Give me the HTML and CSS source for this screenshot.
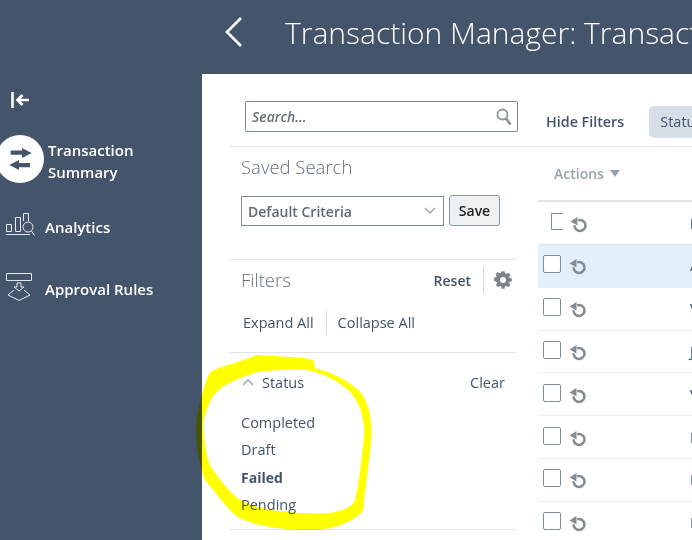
FILE: index.html
```html
<!DOCTYPE html>
<html lang="en">
<head>
    <meta charset="UTF-8">
    <title>Transaction Manager</title>
    <link rel="stylesheet" href="styles.css">
</head>
<body>

<header class="topbar">
    <svg class="back-icon" width="18" height="32" viewBox="0 0 18 32"><path d="M16 2 2 16l14 14" fill="none" stroke="#fff" stroke-width="2.6"/></svg>
    <h1 class="page-title">Transaction Manager: Transaction Summary</h1>
</header>

<div class="layout">
    <nav class="sidebar">
        <svg class="collapse-icon" width="18" height="16" viewBox="0 0 18 16"><path d="M1.500 0v16M18 8H7M11.500 3 6.500 8l5 5" fill="none" stroke="#fff" stroke-width="2.600"/></svg>

        <a class="nav-item nav-current" href="#summary">
            <span class="nav-circle">
                <svg width="24" height="24" viewBox="0 0 24 24"><path d="M2.700 3.500H14V1l9.700 5L14 11V7.800H2.700zM22 16H11v-3l-9.700 5L11 23v-2.800h11z" fill="#44546a"/></svg>
            </span>
            <span class="nav-label">Transaction<br>Summary</span>
        </a>

        <a class="nav-item nav-analytics" href="#analytics">
            <svg width="30" height="26" viewBox="0 0 30 26" fill="none" stroke="#e4e8ec" stroke-width="1"><path d="M1 22.500h24M1.500 19.500v-7h5v7zM10.500 19.500v-14h5v14zM18.500 9V1.500h5V9"/><circle cx="23" cy="15" r="5"/><path d="m26.500 19 3 4.500"/></svg>
            <span class="nav-label">Analytics</span>
        </a>

        <a class="nav-item nav-approval" href="#approval">
            <svg width="26" height="28" viewBox="0 0 26 28" fill="none" stroke="#e4e8ec" stroke-width="1"><path d="M.5.500h25v7H.5zM11 10h4v4h3l-5 4-5-4h3zM8 17l-6 5 11 5.500L24 22l-6-5"/></svg>
            <span class="nav-label">Approval Rules</span>
        </a>
    </nav>

    <main class="content">
        <aside class="filters">
            <div class="search-box">
                <span class="search-text">Search...</span>
                <svg width="16" height="18" viewBox="0 0 16 18" fill="none" stroke="#8d959c"><circle cx="6.500" cy="6.500" r="5" stroke-width="1.800"/><path d="m10 10.500 4.500 6" stroke-width="2.800"/></svg>
            </div>

            <div class="saved-search">
                <h2 class="panel-title">Saved Search</h2>
                <div class="saved-row">
                    <div class="select-box">
                        <span>Default Criteria</span>
                        <svg width="12" height="8" viewBox="0 0 12 8"><path d="m1 1 5 5 5-5" fill="none" stroke="#9aa2a9" stroke-width="1.400"/></svg>
                    </div>
                    <button class="save-btn">Save</button>
                </div>
            </div>

            <div class="filters-head">
                <h2 class="panel-title">Filters</h2>
                <a class="reset-link">Reset</a>
                <span class="filters-sep"></span>
                <svg width="18" height="18" viewBox="0 0 18 18"><path d="M7.300.5h3.400l.4 2.300 1.500.6 1.900-1.300 2.400 2.400-1.300 1.900.6 1.500 2.300.4v3.400l-2.300.4-.6 1.500 1.300 1.900-2.400 2.400-1.900-1.300-1.500.6-.4 2.300H7.300l-.4-2.300-1.500-.6-1.900 1.300-2.400-2.400 1.300-1.900-.6-1.500L-.8 11V7.600l2.300-.4.6-1.500-1.300-1.900 2.400-2.400 1.900 1.300 1.500-.6z" transform="translate(.8 -.3) scale(.92)" fill="#7d858c"/><circle cx="9" cy="9" r="3" fill="#fff"/></svg>
            </div>

            <div class="expand-row">
                <a>Expand All</a>
                <span class="expand-sep"></span>
                <a>Collapse All</a>
            </div>

            <section class="status-group">
                <div class="status-head">
                    <svg width="12" height="8" viewBox="0 0 12 8"><path d="m1 7 5-5 5 5" fill="none" stroke="#9aa2a9" stroke-width="1.400"/></svg>
                    <span class="status-label">Status</span>
                    <a class="clear-link">Clear</a>
                </div>
                <ul class="status-list">
                    <li>Completed</li>
                    <li>Draft</li>
                    <li class="status-on">Failed</li>
                    <li>Pending</li>
                </ul>
            </section>
        </aside>

        <div class="results">
            <div class="results-bar">
                <a class="hide-link">Hide Filters</a>
                <span class="results-sep"></span>
                <span class="chip">Status</span>
            </div>
            <div class="actions-row">
                <span>Actions</span>
                <svg width="10" height="7" viewBox="0 0 10 7"><path d="M0 0h10L5 7z" fill="#9aa2a9"/></svg>
            </div>

            <div class="row row-first">
                <span class="check check-open"></span>
                <svg class="undo" width="18" height="16" viewBox="0 0 18 16"><use href="#undo"/></svg>
                <b class="cell">Name</b>
            </div>
            <div class="row row-selected">
                <span class="check"></span>
                <svg class="undo" width="18" height="16" viewBox="0 0 18 16"><use href="#undo"/></svg>
                <span class="cell">A</span>
            </div>
            <div class="row">
                <span class="check"></span>
                <svg class="undo" width="18" height="16" viewBox="0 0 18 16"><use href="#undo"/></svg>
                <span class="cell">V</span>
            </div>
            <div class="row">
                <span class="check"></span>
                <svg class="undo" width="18" height="16" viewBox="0 0 18 16"><use href="#undo"/></svg>
                <span class="cell">J</span>
            </div>
            <div class="row">
                <span class="check"></span>
                <svg class="undo" width="18" height="16" viewBox="0 0 18 16"><use href="#undo"/></svg>
                <span class="cell">V</span>
            </div>
            <div class="row">
                <span class="check"></span>
                <svg class="undo" width="18" height="16" viewBox="0 0 18 16"><use href="#undo"/></svg>
                <span class="cell">I</span>
            </div>
            <div class="row">
                <span class="check"></span>
                <svg class="undo" width="18" height="16" viewBox="0 0 18 16"><use href="#undo"/></svg>
                <span class="cell">I</span>
            </div>
            <div class="row">
                <span class="check"></span>
                <svg class="undo" width="18" height="16" viewBox="0 0 18 16"><use href="#undo"/></svg>
                <span class="cell">I</span>
            </div>
        </div>
    </main>
</div>

<!-- undo arrow used in every row -->
<svg class="defs" width="0" height="0">
    <defs>
        <g id="undo" fill="none" stroke="#858d93">
            <path d="M8 3.300a5.500 5.500 0 1 1-3.500 5" stroke-width="2.500"/>
            <path d="M7.500 0v8.500L.5 4.500z" fill="#858d93" stroke="none"/>
        </g>
    </defs>
</svg>

<!-- yellow marker scribble over the status filter -->
<svg class="scribble" width="340" height="200" viewBox="0 0 1020 600">
    <path fill="#ff0" fill-rule="evenodd" d="M200 45C260 50 340 50 370 60L376 85C420 95 470 120 505 150C535 180 545 230 545 280C542 340 530 400 520 510C500 540 440 568 370 570C290 572 200 560 150 535C110 510 80 460 45 420C25 370 15 300 20 240C30 180 45 120 62 95C100 75 160 65 200 45ZM190 100C150 115 100 130 72 165C50 200 38 240 40 270C45 320 50 350 62 380C85 410 110 450 150 480C200 510 300 522 410 520C450 515 485 505 495 480C510 420 515 350 523 280C522 230 510 190 480 155C440 120 400 100 350 90C290 88 230 90 190 100Z"/>
</svg>

</body>
</html>
```

FILE: styles.css
```css
body {
    margin: 0;
    width: 692px;
    height: 540px;
    overflow: hidden;
    position: relative;
    background-color: #44546a;
    font-family: "Open Sans", sans-serif;
    font-size: 14.5px;
    color: #44546a;
}
a {
    text-decoration: none;
}

/* top bar */
.topbar {
    height: 74px;
    display: flex;
    align-items: center;
    padding: 0 0 10px 225px;
    box-sizing: border-box;
    white-space: nowrap;
    overflow: hidden;
}
.back-icon {
    flex: none;
    margin-right: 42px;
}
.page-title {
    margin: 0;
    color: white;
    font-size: 30px;
    font-weight: 300;
}

.layout {
    display: flex;
    height: 466px;
}

/* left navigation */
.sidebar {
    width: 202px;
    flex: none;
    padding-top: 18px;
    box-sizing: border-box;
}
.collapse-icon {
    display: block;
    margin-left: 11px;
}
.nav-item {
    display: flex;
    align-items: flex-start;
    color: white;
    font-size: 15px;
    font-weight: 600;
    line-height: 22px;
}
.nav-current {
    margin: 27px 0 0 -4px;
    gap: 4px;
}
.nav-current .nav-label {
    margin-top: 4px;
}
.nav-circle {
    width: 48px;
    height: 48px;
    flex: none;
    border-radius: 50%;
    background-color: white;
    display: flex;
    align-items: center;
    justify-content: center;
}
.nav-analytics {
    margin: 29px 0 0 5px;
    gap: 10px;
}
.nav-analytics .nav-label {
    margin-top: 4px;
}
.nav-approval {
    margin: 35px 0 0 6px;
    gap: 13px;
}
.nav-approval .nav-label {
    margin-top: 5px;
}

/* filter panel */
.content {
    flex: 1;
    display: flex;
    min-width: 0;
    background-color: white;
}
.filters {
    width: 286px;
    flex: none;
    margin-left: 28px;
}
.search-box {
    margin: 27px 0 0 15px;
    width: 273px;
    height: 31px;
    box-sizing: border-box;
    border: 1px solid #7f8c97;
    border-radius: 2px;
    display: flex;
    align-items: center;
    justify-content: space-between;
    padding: 0 5px 0 6px;
    font-size: 14px;
}
.search-text {
    font-style: italic;
    font-weight: 600;
    color: #666e75;
}
.saved-search {
    margin-top: 14px;
    padding: 7px 0 33px 11px;
    border-top: 1px solid #dfe3e8;
    border-bottom: 1px solid #dfe3e8;
}
.panel-title {
    margin: 0;
    font-size: 18.500px;
    font-weight: 300;
    line-height: 26px;
    color: #5f6f80;
}
.saved-row {
    display: flex;
    gap: 5px;
    margin-top: 16px;
}
.select-box {
    width: 203px;
    height: 30px;
    box-sizing: border-box;
    border: 1px solid #7f8c97;
    display: flex;
    align-items: center;
    justify-content: space-between;
    padding: 0 7px 0 6px;
    font-size: 14px;
    font-weight: 600;
    color: #5f6973;
}
.save-btn {
    width: 51px;
    height: 31px;
    margin-top: -1px;
    padding: 0;
    border: 1px solid #8b97a2;
    border-radius: 3px;
    background-color: #eef1f4;
    font-family: inherit;
    font-size: 14px;
    font-weight: 600;
    color: #222;
}
.filters-head {
    display: flex;
    align-items: center;
    height: 40px;
    padding: 0 4px 0 11px;
}
.filters-head .panel-title {
    flex: 1;
}
.reset-link {
    font-size: 14px;
    font-weight: 600;
}
.filters-sep {
    width: 1px;
    height: 26px;
    margin: 0 10px 0 12px;
    background-color: #d8d8d0;
}
.expand-row {
    display: flex;
    align-items: center;
    height: 44px;
    padding: 0 0 8px 13px;
    border-bottom: 1px solid #dfe3e8;
}
.expand-sep {
    width: 1px;
    height: 24px;
    margin: 0 11px 0 12px;
    background-color: #d5dde4;
}
.status-group {
    padding: 19px 11px 11px;
    border-bottom: 1px solid #dfe3e8;
}
.status-head {
    display: flex;
    align-items: center;
    height: 20px;
}
.status-head svg {
    margin-left: 1px;
}
.status-label {
    flex: 1;
    margin-left: 8px;
}
.status-list {
    list-style: none;
    margin: 17px 0 0;
    padding: 0;
    line-height: 27.300px;
}
.status-on {
    font-size: 14px;
    font-weight: 700;
}

/* results on the right */
.results {
    flex: 1;
    min-width: 0;
    overflow: hidden;
}
.results-bar {
    display: flex;
    align-items: center;
    height: 73px;
    padding: 23px 0 0 30px;
    box-sizing: border-box;
    border-bottom: 1px solid #dfe3e8;
    white-space: nowrap;
}
.hide-link {
    font-size: 14.300px;
    font-weight: 600;
}
.results-sep {
    width: 1px;
    height: 27px;
    margin: 0 11px 0 14px;
    background-color: #d8d8d0;
}
.chip {
    flex: none;
    width: 80px;
    height: 32px;
    line-height: 32px;
    padding-left: 11px;
    border-radius: 5px;
    background-color: #d6dfe7;
}
.actions-row {
    display: flex;
    align-items: center;
    gap: 6px;
    height: 55px;
    margin-left: 22px;
    padding-left: 16px;
    border-bottom: 2px solid #dfe3e8;
    box-sizing: border-box;
    font-size: 14px;
    font-weight: 600;
    color: #98a2ab;
}
.row {
    display: flex;
    align-items: center;
    height: 42.800px;
    margin-left: 22px;
    box-sizing: border-box;
    border-bottom: 1px solid #eceef0;
    white-space: nowrap;
}
.row-first {
    height: 43px;
    border-bottom-color: #dfe3e8;
}
.row-selected {
    border-bottom-color: #e3f0fb;
    background-color: #e3f0fb;
}
.check {
    width: 18px;
    height: 18px;
    flex: none;
    box-sizing: border-box;
    margin: -3px 0 0 5px;
    border: 1px solid #7c8e9c;
    border-radius: 2px;
    background-color: white;
}
.check-open {
    width: 12px;
    height: 17px;
    margin-left: 13px;
    border-right: none;
    border-radius: 0;
}
.undo {
    flex: none;
    margin: 3px 0 0 8px;
}
.check-open + .undo {
    margin-left: 7px;
}
.cell {
    margin-left: 103px;
    color: #33475b;
}
.row-first .cell {
    margin-left: 102px;
}
.defs {
    position: absolute;
}

.scribble {
    position: absolute;
    left: 190px;
    top: 340px;
    mix-blend-mode: multiply;
}
```
